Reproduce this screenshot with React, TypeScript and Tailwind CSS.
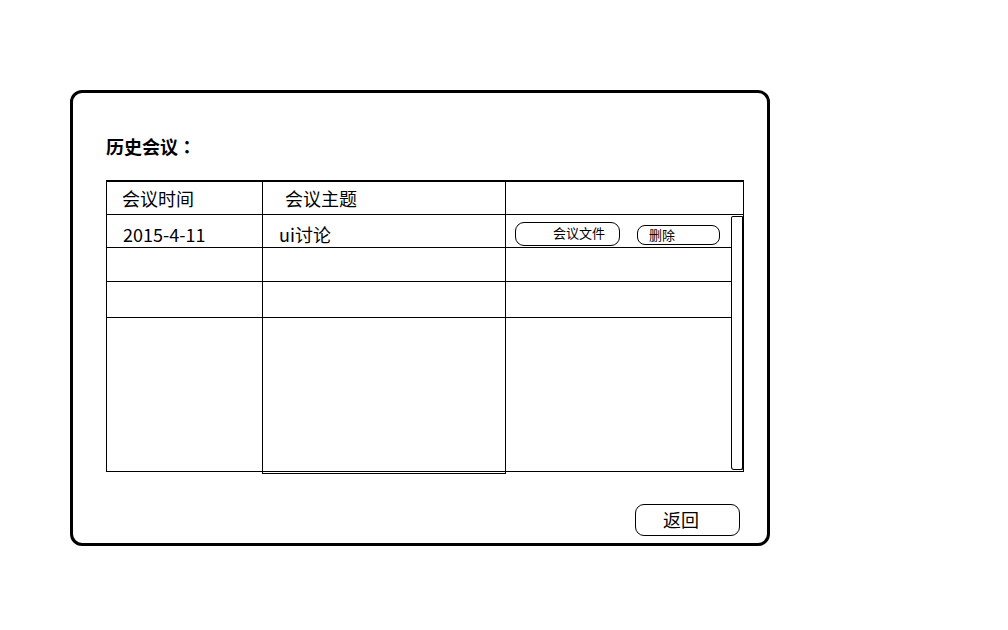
export default function App() {
  return (
    <div className="min-h-screen bg-white pt-[90px] pl-[70px] font-['Noto_Sans_CJK_SC','Noto_Sans',sans-serif] text-black">
      <div className="w-[700px] h-[456px] border-[3px] border-black rounded-[12px] pl-[33px] pt-[41px] flex flex-col">
        {/* 标题 */}
        <div className="h-[24px] leading-[24px] text-[18px] font-bold">
          历史会议<span className="font-['Noto_Sans_CJK_JP',sans-serif]">：</span>
        </div>

        {/* 表格 */}
        <div className="relative w-[638px] mt-[22px]">
          <div className="flex h-[35px] border-t-2 border-b border-black">
            <div className="w-[157px] border-l border-r border-black flex items-center pl-[15px] text-[18px] leading-[24px]">
              会议时间
            </div>
            <div className="w-[243px] border-r border-black flex items-center pl-[22px] text-[18px] leading-[24px]">
              会议主题
            </div>
            <div className="flex-1 border-r border-black" />
          </div>

          <div className="flex h-[33px] border-b border-black">
            <div className="w-[157px] border-l border-r border-black flex items-center pt-[6px] pl-[16px] text-[18px] leading-[24px]">
              2015-4-11
            </div>
            <div className="w-[243px] border-r border-black flex items-center pt-[6px] pl-[16px] text-[18px] leading-[24px]">
              ui讨论
            </div>
            <div className="flex-1 border-r border-black flex items-start pl-[9px]">
              <button className="mt-[7px] w-[105px] h-[24px] border border-black rounded-[9px] text-left pl-[37px] text-[13px] leading-[15px] pb-[4px]">
                会议文件
              </button>
              <button className="mt-[10px] ml-[17px] w-[83px] h-[20px] border border-black rounded-[8px] text-left pl-[11px] text-[13px] leading-[15px] pb-[1px]">
                删除
              </button>
            </div>
          </div>

          <div className="flex h-[34px] border-b border-black">
            <div className="w-[157px] border-l border-r border-black" />
            <div className="w-[243px] border-r border-black" />
            <div className="flex-1 border-r border-black" />
          </div>

          <div className="flex h-[36px] border-b border-black">
            <div className="w-[157px] border-l border-r border-black" />
            <div className="w-[243px] border-r border-black" />
            <div className="flex-1 border-r border-black" />
          </div>

          <div className="flex items-start h-[154px] border-b border-black">
            <div className="w-[156px] h-full border-l border-black" />
            <div className="w-[244px] h-[156px] border-l border-r border-b border-black" />
            <div className="flex-1 h-full border-r border-black" />
          </div>

          {/* 滚动条 */}
          <div className="absolute right-0 top-[36px] w-[13px] h-[254px] bg-white border border-black border-r-2 rounded-t-[2px] rounded-b-[3px]" />
        </div>

        <div className="flex justify-end w-[634px] mt-[32px]">
          <button className="w-[105px] h-[32px] border border-black rounded-[9px] text-left pl-[27px] text-[18px] leading-[24px] pb-[3px]">
            返回
          </button>
        </div>
      </div>
    </div>
  );
}
